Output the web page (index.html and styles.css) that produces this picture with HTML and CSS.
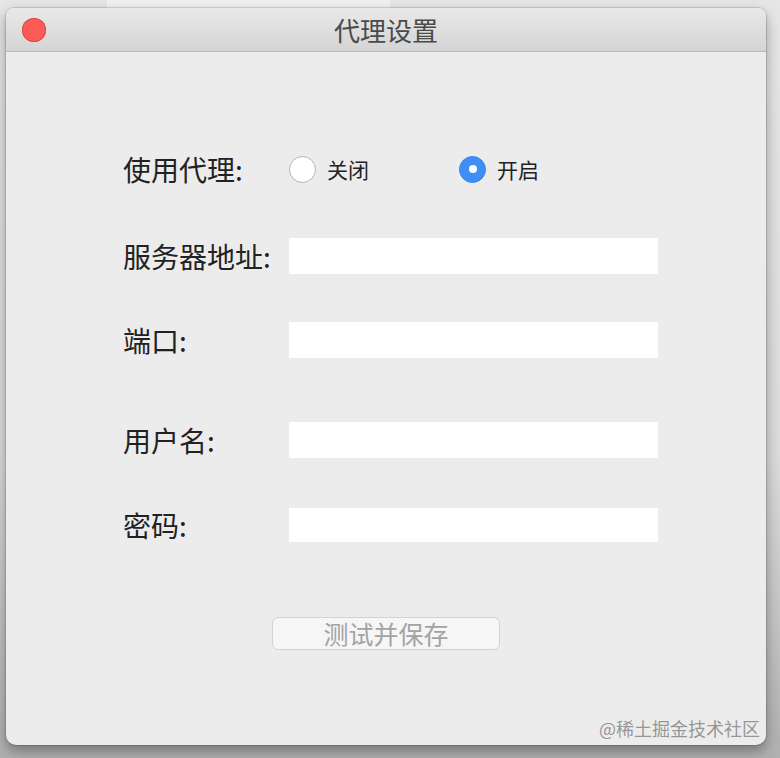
FILE: index.html
```html
<!DOCTYPE html>
<html lang="zh">
<head>
<meta charset="utf-8">
<title>代理设置</title>
<link rel="stylesheet" href="styles.css">
</head>
<body>
<div class="window">
  <div class="titlebar">
    <span class="close"></span>
    <span class="title">代理设置</span>
  </div>
  <div class="content">
    <div class="form">
      <div class="row row-proxy">
        <label class="label">使用代理:</label>
        <div class="radios">
          <label class="radio"><span class="dot"></span><span class="rtext">关闭</span></label>
          <label class="radio"><span class="dot on"></span><span class="rtext">开启</span></label>
        </div>
      </div>
      <div class="row row-server">
        <label class="label">服务器地址:</label>
        <input class="field" type="text">
      </div>
      <div class="row row-port">
        <label class="label">端口:</label>
        <input class="field" type="text">
      </div>
      <div class="row row-user">
        <label class="label">用户名:</label>
        <input class="field" type="text">
      </div>
      <div class="row row-pass">
        <label class="label">密码:</label>
        <input class="field short" type="password">
      </div>
    </div>
    <div class="actions">
      <button class="btn" disabled>测试并保存</button>
    </div>
    <div class="watermark">@稀土掘金技术社区</div>
  </div>
</div>
</body>
</html>
```

FILE: styles.css
```css
html, body {
  margin: 0;
  padding: 0;
}
body {
  width: 780px;
  height: 758px;
  overflow: hidden;
  font-family: "Noto Sans CJK SC", "Noto Sans", sans-serif;
  background:
    linear-gradient(#f1f1f1, #f1f1f1) 107px 0 / 283px 8px no-repeat,
    linear-gradient(to bottom, #e6e6e6 0%, #dcdcdc 60%, #b0b0b0 100%);
  padding: 8px 0 0 6px;
  box-sizing: border-box;
}
.window {
  width: 760px;
  height: 737px;
  border-radius: 8px 8px 10px 10px;
  background: #ececec;
  box-shadow: 0 0 0 1px rgba(0,0,0,0.12), 0 6px 14px rgba(0,0,0,0.35);
  display: flex;
  flex-direction: column;
  overflow: hidden;
}
.titlebar {
  height: 43px;
  flex: none;
  background: linear-gradient(#e9e9e9, #d4d4d4);
  border-bottom: 1px solid #b9b9b9;
  display: flex;
  align-items: center;
  justify-content: center;
  position: relative;
}
.close {
  position: absolute;
  left: 16px;
  top: 10px;
  width: 24px;
  height: 24px;
  border-radius: 50%;
  background: #fc5b57;
  box-shadow: inset 0 0 0 1px #e5443f;
}
.title {
  font-size: 26px;
  color: #4a4a4a;
  line-height: 1;
}
.content {
  flex: 1;
  display: flex;
  flex-direction: column;
  position: relative;
}
.form {
  padding: 99px 0 0 117px;
  display: flex;
  flex-direction: column;
}
.row {
  display: flex;
  align-items: center;
  height: 36px;
}
.row-server { margin-top: 51px; }
.row-port { margin-top: 48px; }
.row-user { margin-top: 64px; }
.row-pass { margin-top: 50px; height: 34px; }
.label {
  width: 166px;
  flex: none;
  font-size: 28px;
  color: #222;
  line-height: 1;
}
.radios {
  display: flex;
}
.radio {
  width: 170px;
  display: flex;
  align-items: center;
  gap: 11px;
}
.dot {
  width: 25px;
  height: 25px;
  border-radius: 50%;
  background: #fff;
  border: 1px solid #b3b3b3;
  display: flex;
  align-items: center;
  justify-content: center;
}
.dot.on {
  background: #3d8ff6;
  border-color: #3583ea;
}
.dot.on::after {
  content: "";
  width: 8px;
  height: 8px;
  border-radius: 50%;
  background: #fff;
}
.rtext {
  font-size: 21px;
  color: #222;
  line-height: 1;
}
.field {
  width: 369px;
  height: 36px;
  box-sizing: border-box;
  border: none;
  background: #fff;
  margin: 0;
  padding: 0 6px;
  outline: none;
}
.field.short { height: 34px; }
.actions {
  margin-top: 75px;
  padding-left: 266px;
  display: flex;
}
.btn {
  width: 228px;
  height: 33px;
  box-sizing: border-box;
  border: 1px solid #d3d3d3;
  border-radius: 6px;
  background: #f6f6f6;
  color: #a3a3a3;
  font-family: "Noto Sans CJK SC", sans-serif;
  font-size: 25px;
  line-height: 1;
  padding: 0;
  display: flex;
  align-items: center;
  justify-content: center;
}
.watermark {
  position: absolute;
  right: 6px;
  bottom: 8px;
  font-size: 18px;
  color: rgba(120,120,120,0.75);
  line-height: 1;
}
```
